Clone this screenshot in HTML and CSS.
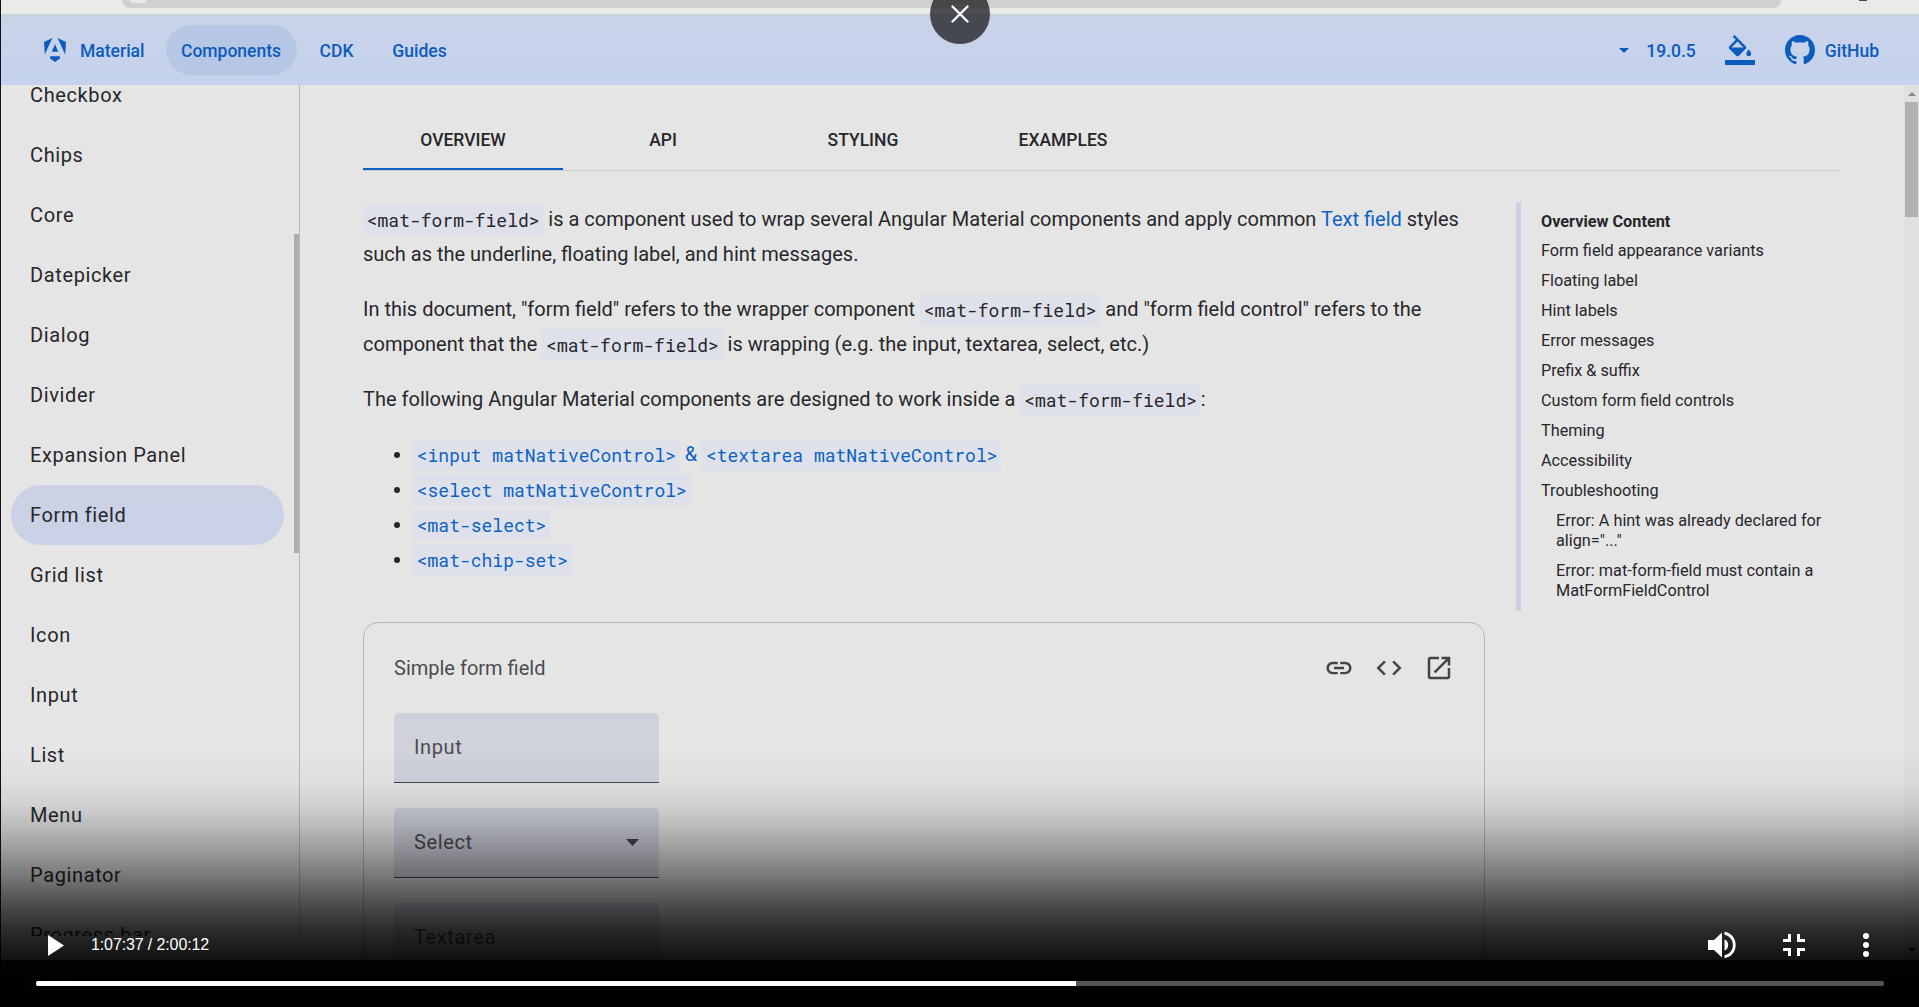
FILE: index.html
```html
<!DOCTYPE html>
<html lang="en">
<head>
<meta charset="utf-8">
<title>Form field | Angular Material</title>
<link rel="stylesheet" href="styles.css">
</head>
<body>
<div class="player">
  <div class="video">
    <div class="chrome"><div class="omnibox"><span class="site-info"></span></div><span class="avatar"></span></div>
    <header class="navbar">
      <a class="brand"><svg width="22" height="24" viewBox="0 0 22 24"><path d="M13.6 0 22 3.9l-.8 12.6zM15.9 18.2v2.2L11 24l-4.9-3.6v-2.2zM7.8 13.8 11 6l3.2 7.8zM8.4 0 .8 16.5 0 3.9z"/></svg>Material</a>
      <a class="nav active">Components</a>
      <a class="nav cdk">CDK</a>
      <a class="nav guides">Guides</a>
      <span class="spacer"></span>
      <a class="version"><svg width="10" height="5" viewBox="0 0 10 5"><path d="M0 0h10L5 5z"/></svg>19.0.5</a>
      <svg class="paint" width="30" height="30" viewBox="0 0 24 24"><path d="M16.56 8.94 7.62 0 6.21 1.41l2.38 2.38-5.15 5.15c-.59.59-.59 1.54 0 2.12l5.5 5.5c.29.29.68.44 1.06.44s.77-.15 1.06-.44l5.5-5.5c.59-.58.59-1.53 0-2.12zM5.21 10 10 5.21 14.79 10zM19 11.5s-2 2.17-2 3.5c0 1.1.9 2 2 2s2-.9 2-2c0-1.33-2-3.500-2-3.500zM0 20h24v4H0z"/></svg>
      <a class="github"><svg width="30" height="30" viewBox="0 0 16 16"><path d="M8 0C3.580 0 0 3.580 0 8c0 3.540 2.290 6.530 5.470 7.590.4.070.550-.170.550-.380 0-.190-.010-.820-.010-1.490-2.010.370-2.530-.490-2.690-.940-.090-.230-.480-.940-.820-1.130-.280-.150-.680-.520-.010-.530.630-.010 1.080.580 1.230.820.720 1.210 1.870.870 2.330.660.070-.520.280-.870.510-1.070-1.780-.2-3.640-.890-3.640-3.950 0-.870.310-1.590.820-2.150-.080-.2-.360-1.020.080-2.120 0 0 .670-.210 2.200.820.640-.180 1.320-.270 2-.270s1.360.090 2 .270c1.530-1.040 2.200-.820 2.200-.820.440 1.100.160 1.920.080 2.120.510.560.820 1.270.820 2.150 0 3.070-1.870 3.750-3.650 3.950.290.250.540.730.540 1.480 0 1.070-.010 1.930-.010 2.200 0 .210.150.460.550.380A8.010 8.010 0 0 0 16 8c0-4.420-3.580-8-8-8z"/></svg>GitHub</a>
    </header>
    <div class="page">
      <nav class="sidebar">
        <a>Checkbox</a><a>Chips</a><a>Core</a><a>Datepicker</a><a>Dialog</a><a>Divider</a><a>Expansion Panel</a><a class="current">Form field</a><a>Grid list</a><a>Icon</a><a>Input</a><a>List</a><a>Menu</a><a>Paginator</a><a>Progress bar</a>
        <span class="side-thumb"></span>
      </nav>
      <main class="content">
        <div class="tabs"><a class="selected">OVERVIEW</a><a>API</a><a>STYLING</a><a>EXAMPLES</a></div>
        <div class="columns">
          <article class="doc">
            <p><code>&lt;mat-form-field&gt;</code> is a component used to wrap several Angular Material components and apply common <a>Text field</a> styles<br>such as the underline, floating label, and hint messages.</p>
            <p>In this document, "form field" refers to the wrapper component <code>&lt;mat-form-field&gt;</code> and "form field control" refers to the<br>component that the <code>&lt;mat-form-field&gt;</code> is wrapping (e.g. the input, textarea, select, etc.)</p>
            <p>The following Angular Material components are designed to work inside a <code>&lt;mat-form-field&gt;</code>:</p>
            <ul>
              <li><a><code>&lt;input matNativeControl&gt;</code> &amp; <code>&lt;textarea matNativeControl&gt;</code></a></li>
              <li><a><code>&lt;select matNativeControl&gt;</code></a></li>
              <li><a><code>&lt;mat-select&gt;</code></a></li>
              <li><a><code>&lt;mat-chip-set&gt;</code></a></li>
            </ul>
            <section class="example">
              <div class="example-head"><span>Simple form field</span>
                <svg width="30" height="30" viewBox="0 0 24 24"><path d="M3.900 12c0-1.710 1.390-3.100 3.100-3.100h4V7H7c-2.760 0-5 2.240-5 5s2.240 5 5 5h4v-1.900H7c-1.710 0-3.100-1.390-3.100-3.100zM8 13h8v-2H8zm9-6h-4v1.900h4c1.710 0 3.100 1.390 3.100 3.100s-1.390 3.100-3.100 3.100h-4V17h4c2.760 0 5-2.240 5-5s-2.240-5-5-5z"/></svg>
                <svg width="30" height="30" viewBox="0 0 24 24"><path d="M9.400 16.600 4.800 12l4.600-4.600L8 6l-6 6 6 6zm5.200 0 4.600-4.600-4.600-4.600L16 6l6 6-6 6z"/></svg>
                <svg width="30" height="30" viewBox="0 0 24 24"><path d="M19 19H5V5h7V3H5c-1.110 0-2 .9-2 2v14c0 1.100.890 2 2 2h14c1.100 0 2-.9 2-2v-7h-2zM14 3v2h3.590l-9.830 9.830 1.410 1.410L19 6.410V10h2V3z"/></svg>
              </div>
              <div class="field">Input</div>
              <div class="field">Select<svg width="13" height="7" viewBox="0 0 13 7"><path d="M0 0h13L6.500 7z"/></svg></div>
              <div class="field">Textarea</div>
            </section>
          </article>
          <aside class="toc">
            <b>Overview Content</b><a>Form field appearance variants</a><a>Floating label</a><a>Hint labels</a><a>Error messages</a><a>Prefix &amp; suffix</a><a>Custom form field controls</a><a>Theming</a><a>Accessibility</a><a>Troubleshooting</a><a class="sub">Error: A hint was already declared for<br>align="..."</a><a class="sub">Error: mat-form-field must contain a<br>MatFormFieldControl</a>
          </aside>
        </div>
      </main>
      <div class="scrollbar"><svg width="8" height="4" viewBox="0 0 8 4"><path d="M0 4h8L4 0z"/></svg><span class="thumb"></span><svg class="down" width="8" height="4" viewBox="0 0 8 4"><path d="M0 0h8L4 4z"/></svg></div>
    </div>
    <footer class="taskbar"><i class="sun"></i><span>32°C</span><span class="spacer"></span><span class="lang">ESP</span><span>21:42</span></footer>
  </div>
  <div class="shade"></div>
  <button class="close"><svg width="18" height="18" viewBox="0 0 18 18"><path d="M1.500 1.500l15 15M16.500 1.500l-15 15" stroke="#fff" stroke-width="2.400" stroke-linecap="round"/></svg></button>
  <div class="controls">
    <div class="buttons">
      <svg class="play" width="16" height="21" viewBox="0 0 16 21"><path d="M0 0v21l16-10.500z"/></svg>
      <span class="time">1:07:37 / 2:00:12</span>
      <span class="spacer"></span>
      <svg width="28" height="28" viewBox="0 0 28 28"><path d="M0 9v10h6l8 7.500V1.500L6 9zM16.500 8.500v11c2.300-.8 3.700-3 3.700-5.500s-1.400-4.700-3.700-5.500zM16.500.8v2.900c4.900.9 8.400 5 8.400 10.300s-3.500 9.400-8.400 10.300v2.900C23 26.200 27.700 20.800 27.700 14S23 1.800 16.500.8z"/></svg>
      <svg class="shrink" width="22" height="22" viewBox="0 0 22 22"><path d="M0 8V5h5V0h3v8zM14 0h3v5h5v3h-8zM0 14h8v8H5v-5H0zM14 14h8v3h-5v5h-3z"/></svg>
      <svg class="more" width="6" height="24" viewBox="0 0 6 24"><circle cx="3" cy="3" r="3"/><circle cx="3" cy="12" r="3"/><circle cx="3" cy="21" r="3"/></svg>
    </div>
    <div class="progress"><span style="width:1040px"></span></div>
  </div>
</div>
</body>
</html>
```
FILE: styles.css
```css
* { box-sizing: border-box; }
body { margin: 0; background: #000; font-family: Roboto, "Liberation Sans", sans-serif; color: #27272b; }
.player { position: relative; width: 1919px; height: 1007px; overflow: hidden; }
.video { display: flex; flex-direction: column; height: 1007px; border-left: 1px solid #111; }
.spacer { flex: 1; }

.chrome { display: flex; flex: none; height: 14px; background: #e8ebea; }
.omnibox { width: 1659px; height: 8px; margin-left: 121px; padding-left: 8px; background: #d0d0d0; border-radius: 0 0 13px 13px; }
.site-info { display: block; width: 16px; height: 3px; background: #e8eaea; border-radius: 0 0 8px 8px; }
.avatar { width: 8px; height: 1px; margin-left: 78px; background: #444; }

.navbar { display: flex; align-items: center; flex: none; height: 71px; padding: 2px 39px 0 43px; background: linear-gradient(#c8cfd6 0, #c8d1dc 2px, #c8d3e8 4px, #c8d2ea 30%, #c5d2ed); color: #0b5cbd; fill: #0b5cbd; font-size: 17.500px; font-weight: 500; }
.navbar a { display: flex; align-items: center; white-space: nowrap; }
.brand { gap: 14px; width: 122px; }
.navbar .nav { height: 50px; justify-content: center; }
.navbar .active { width: 131px; padding-right: 1px; margin-top: -2px; padding-top: 2px; border-radius: 25px; background: #b6c7e6; }
.cdk { width: 79px; }
.guides { width: 87px; }
.version { gap: 17px; }
.paint { margin: -2px 0 0 29px; }
.github { margin-left: 30px; gap: 10px; padding-right: 1px; }
.github svg { margin-top: -2px; }
.brand svg { margin-top: -1px; }

.page { display: flex; height: 875px; flex: none; overflow: hidden; background: #e6e5e6; }
.sidebar { position: relative; width: 299px; height: 851px; flex: none; overflow: hidden; border-right: 1px solid #b9b9be; padding: 0 15px 0 10px; }
.sidebar a { display: flex; align-items: center; height: 60px; padding-left: 19px; border-radius: 30px; font-size: 20px; letter-spacing: .62px; }
.sidebar a:first-child { margin-top: -20px; }
.sidebar .current { background: linear-gradient(#cdd1e5, #c9d2e8); }
.side-thumb { position: absolute; right: 0; top: 149px; width: 5px; height: 319px; background: #adadad; }

.content { flex: 1; min-width: 0; padding: 24px 64px 0 63px; }
.tabs { display: flex; height: 62px; border-bottom: 1px solid #cbcdd2; font-size: 17.500px; font-weight: 500; }
.tabs a { width: 200px; height: 61px; display: flex; align-items: center; justify-content: center; }
.tabs .selected { border-bottom: 2px solid #0b60c4; padding-top: 2px; }
.columns { display: flex; align-items: flex-start; justify-content: space-between; padding-top: 31px; }
.doc { width: 1122px; font-size: 20px; line-height: 35px; white-space: nowrap; }
.doc p { margin: 0 0 20px; }
.doc a { color: #0b62c4; }
.doc code { font-family: "Roboto Mono", "Liberation Mono", monospace; font-size: 18px; line-height: 1; vertical-align: -1px; padding: 4px 3.750px; background: #dfe1ea; border-radius: 3px; }
.doc ul { margin: 0 0 45px; padding-left: 50px; }

.example { border: 1px solid #b5b5ba; border-radius: 15px; height: 500px; padding: 15px 30px; }
.example-head { display: flex; align-items: center; gap: 20px; height: 60px; color: #4c4c50; fill: #444549; }
.example-head span { flex: 1; }
.field { display: flex; align-items: center; justify-content: space-between; width: 265px; height: 70px; margin: 15px 0 25px; padding: 0 20px; border-radius: 5px 5px 0 0; background: #cfd1db; border-bottom: 1px solid #44454d; color: #4b4c52; fill: #44454d; letter-spacing: .62px; }
.field + .field { margin-top: 0; }

.toc { width: 324px; height: 409px; border-left: 5px solid #cbd1e4; padding: 9px 0 0 20px; font-size: 16.250px; line-height: 20px; white-space: nowrap; }
.toc b, .toc a { display: block; margin-bottom: 10px; }
.toc b { padding-top: 1px; margin-bottom: 9px; font-weight: 700; }
.toc .sub { padding-left: 15px; }

.scrollbar { width: 15px; display: flex; flex-direction: column; align-items: center; background: #e0e0e1; padding-top: 7px; fill: #88888a; }
.thumb { width: 13px; height: 115px; margin-top: 6px; background: #b1b1b2; }
.down { margin-top: auto; margin-bottom: 8px; fill: #222; }

.taskbar { display: flex; flex: 1; align-items: flex-start; gap: 10px; padding: 10px 42px 0 20px; background: #333; color: #a0a0a0; font-size: 12px; }
.sun { width: 20px; height: 20px; border-radius: 50%; background: #a77a10; }
.lang { margin-right: 92px; }

.shade { position: absolute; inset: 707px 0 0; background: linear-gradient(transparent 0, rgba(0,0,0,0) 45px, rgba(0,0,0,.03) 75px, rgba(0,0,0,.09) 98px, rgba(0,0,0,.18) 118px, rgba(0,0,0,.31) 141px, rgba(0,0,0,.47) 168px, rgba(0,0,0,.65) 195px, rgba(0,0,0,.81) 223px, rgba(0,0,0,.92) 252px, rgba(0,0,0,.98) 270px, #000 300px); }
.close { position: absolute; left: 930px; top: -16px; width: 60px; height: 60px; border: 0; padding: 0; border-radius: 50%; background: rgba(26,26,29,.75); display: flex; align-items: center; justify-content: center; }
.controls { position: absolute; left: 36px; right: 35px; bottom: 21px; }
.buttons { display: flex; align-items: center; height: 28px; margin-bottom: 22px; padding: 0 15px 0 12px; fill: #fff; color: #fff; }
.time { margin-left: 27px; font: 16px "Liberation Sans", sans-serif; letter-spacing: -.12px; }
.shrink { margin: 0 58px 0 47px; }
.progress { height: 5px; border-radius: 2px; overflow: hidden; background: #555; }
.progress span { display: block; height: 5px; background: #fff; }
```
